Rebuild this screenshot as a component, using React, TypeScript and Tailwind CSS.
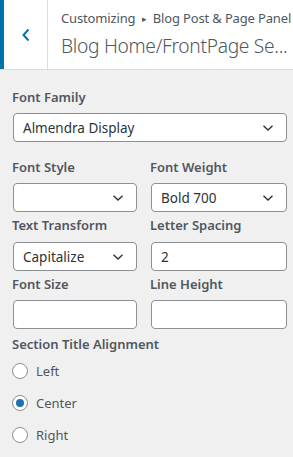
import React from "react";

const font = { fontFamily: '"Noto Sans", "Open Sans", sans-serif' };

function Chevron() {
  return (
    <svg width="12" height="8" viewBox="0 0 12 8" className="absolute right-[12px] top-1/2 -translate-y-1/2">
      <path d="M1.5 1.8 L6 6 L10.5 1.8" fill="none" stroke="#2c3338" strokeWidth="1.4" />
    </svg>
  );
}

function Select({ value, className = "" }: { value: string; className?: string }) {
  return (
    <div className={`relative h-[29px] rounded-[4px] border border-[#8c8f94] bg-white flex items-center pl-[9px] text-[13.5px] leading-[18px] text-[#2c3338] ${className}`}>
      {value}
      <Chevron />
    </div>
  );
}

function Input({ value, className = "" }: { value: string; className?: string }) {
  return (
    <div className={`h-[29px] rounded-[4px] border border-[#8c8f94] bg-white flex items-center pl-[9px] text-[13.5px] leading-[18px] text-[#2c3338] ${className}`}>
      {value}
    </div>
  );
}

function Label({ children }: { children: React.ReactNode }) {
  return <div className="h-[18px] text-[13px] leading-[18px] font-semibold text-[#50575e]">{children}</div>;
}

function Radio({ label, checked }: { label: string; checked?: boolean }) {
  return (
    <div className="flex items-center h-[32px]">
      <div className="w-[16px] h-[16px] rounded-full border border-[#8c8f94] bg-white flex items-center justify-center">
        {checked && <div className="w-[8px] h-[8px] rounded-full bg-[#2271b1]" />}
      </div>
      <span className="ml-[8px] text-[13px] leading-[18px] text-[#50575e]">{label}</span>
    </div>
  );
}

export default function App() {
  return (
    <div style={font} className="w-[293px] h-[457px] bg-[#f0f0f1] overflow-hidden">
      <div className="h-[70px] bg-white border-b border-[#dcdcde] flex">
        <div className="w-[4px] bg-[#0073aa]" />
        <div className="w-[44px] border-r border-[#dcdcde] flex items-center justify-center">
          <svg width="10" height="14" viewBox="0 0 10 14">
            <path d="M7.5 1.5 L2.5 7 L7.5 12.5" fill="none" stroke="#0073aa" strokeWidth="2" />
          </svg>
        </div>
        <div className="pl-[13px] pt-[9px] whitespace-nowrap">
          <div className="text-[13px] leading-[18px] text-[#50575e] tracking-[-0.15px]">
            Customizing <span className="text-[9px] align-[1px] mx-[3px]">▸</span> Blog Post &amp; Page Panel
          </div>
          <div className="text-[19.2px] leading-[28px] font-light text-[#50575e] mt-[4px] tracking-[-0.3px]">
            Blog Home/FrontPage Se...
          </div>
        </div>
      </div>

      <div className="px-[12px] pt-[18px]">
        <Label>Font Family</Label>
        <Select value="Almendra Display" className="mt-[7px] ml-px w-[274px]" />

        <div className="flex mt-[16px]">
          <div className="w-[124px]">
            <Label>Font Style</Label>
            <Select value="" className="mt-[7px] ml-px w-[124px]" />
          </div>
          <div className="ml-[14px]">
            <Label>Font Weight</Label>
            <Select value="Bold 700" className="mt-[7px] ml-px w-[136px]" />
          </div>
        </div>

        <div className="flex mt-[4px]">
          <div className="w-[124px]">
            <Label>Text Transform</Label>
            <Select value="Capitalize" className="mt-[8px] ml-px w-[124px]" />
          </div>
          <div className="ml-[14px]">
            <Label>Letter Spacing</Label>
            <Input value="2" className="mt-[8px] ml-px w-[136px]" />
          </div>
        </div>

        <div className="flex mt-[4px]">
          <div className="w-[124px]">
            <Label>Font Size</Label>
            <Input value="" className="mt-[7px] ml-px w-[124px]" />
          </div>
          <div className="ml-[14px]">
            <Label>Line Height</Label>
            <Input value="" className="mt-[7px] ml-px w-[136px]" />
          </div>
        </div>

        <div className="mt-[6px]">
          <Label>Section Title Alignment</Label>
          <div className="mt-[2px]">
            <Radio label="Left" />
            <Radio label="Center" checked />
            <Radio label="Right" />
          </div>
        </div>
      </div>
    </div>
  );
}
